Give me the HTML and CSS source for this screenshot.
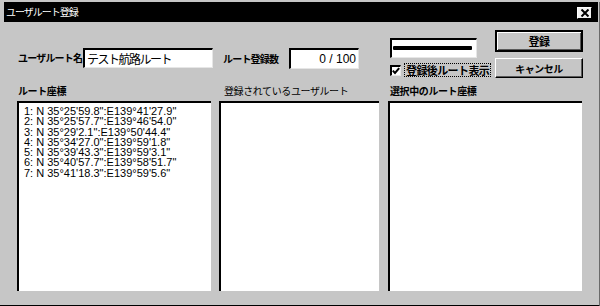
FILE: index.html
```html
<!DOCTYPE html>
<html lang="ja">
<head>
<meta charset="utf-8">
<title>ユーザルート登録</title>
<link rel="stylesheet" href="styles.css">
</head>
<body>
<div class="window">
  <div class="titlebar">
    <span class="title">ユーザルート登録</span>
    <span class="close"><svg width="10" height="8" viewBox="0 0 10 8"><path d="M1.5 0.5 L8.5 7.5 M8.5 0.5 L1.5 7.5" stroke="#000" stroke-width="2" fill="none"/></svg></span>
  </div>
  <div class="top">
    <div class="field name-field">
      <span class="label bold">ユーザルート名</span>
      <div class="input name-input">テスト航路ルート</div>
    </div>
    <div class="field count-field">
      <span class="label bold">ルート登録数</span>
      <div class="input count-input">0 / 100</div>
    </div>
    <div class="preview-group">
      <div class="preview"><span class="line"></span></div>
      <div class="check-row">
        <span class="checkbox"><svg width="8" height="8" viewBox="0 0 8 8"><path d="M0.8 3.6 L3 6 L7.2 1.2" stroke="#000" stroke-width="2" fill="none"/></svg></span>
        <span class="check-label">登録後ルート表示</span>
      </div>
    </div>
    <div class="buttons">
      <div class="btn btn-default">登録</div>
      <div class="btn">キャンセル</div>
    </div>
  </div>
  <div class="panes">
    <div class="pane pane-1">
      <div class="pane-label bold">ルート座標</div>
      <div class="list">
        <div class="item">1: N 35°25'59.8":E139°41'27.9"</div>
        <div class="item">2: N 35°25'57.7":E139°46'54.0"</div>
        <div class="item">3: N 35°29'2.1":E139°50'44.4"</div>
        <div class="item">4: N 35°34'27.0":E139°59'1.8"</div>
        <div class="item">5: N 35°39'43.3":E139°59'3.1"</div>
        <div class="item">6: N 35°40'57.7":E139°58'51.7"</div>
        <div class="item">7: N 35°41'18.3":E139°59'5.6"</div>
      </div>
    </div>
    <div class="pane pane-2">
      <div class="pane-label">登録されているユーザルート</div>
      <div class="list"></div>
    </div>
    <div class="pane pane-3">
      <div class="pane-label bold">選択中のルート座標</div>
      <div class="list"></div>
    </div>
  </div>
</div>
</body>
</html>
```

FILE: styles.css
```css
html, body {
  margin: 0;
  padding: 0;
}

body {
  width: 600px;
  height: 306px;
  overflow: hidden;
  background: #c6c6c6;
  color: #000;
  font-family: "Noto Sans CJK JP", "Liberation Sans", sans-serif;
}

.window {
  box-sizing: border-box;
  width: 600px;
  height: 306px;
  border-right: 1px solid #6a6a6a;
  border-bottom: 3px solid #000;
}

.titlebar {
  height: 20px;
  margin: 2px 1px 0 4px;
  padding: 0 6px 0 2px;
  background: #000;
  display: flex;
  align-items: center;
  justify-content: space-between;
}

.title {
  color: #fff;
  font-size: 10px;
  line-height: 1;
  letter-spacing: -1px;
}

.close {
  box-sizing: border-box;
  width: 15px;
  height: 12px;
  margin-top: 2px;
  background: #f2f2f2;
  border: 1px solid;
  border-color: #fff #000 #000 #fff;
  display: flex;
  align-items: center;
  justify-content: center;
}

.bold {
  font-weight: 700;
}

.top {
  display: flex;
  align-items: flex-start;
  height: 62px;
  padding-left: 17px;
}

.field {
  display: flex;
  align-items: center;
  margin-top: 26px;
}

.label {
  font-size: 10px;
  line-height: 12px;
  letter-spacing: -0.8px;
  white-space: nowrap;
}

.name-field .label {
  width: 66px;
  padding-left: 1px;
  box-sizing: border-box;
}

.count-field {
  margin-left: 10px;
}

.count-field .label {
  width: 66px;
}

.input {
  box-sizing: border-box;
  background: #fff;
  border-style: solid;
  border-width: 2px 1px 1px 2px;
  border-color: #000 #e6e6e6 #e6e6e6 #000;
  white-space: nowrap;
}

.name-input {
  width: 130px;
  height: 20px;
  padding-left: 2px;
  font-size: 12px;
  line-height: 17px;
  letter-spacing: -1.5px;
}

.count-input {
  width: 70px;
  height: 21px;
  padding-right: 2px;
  text-align: right;
  font-family: "Liberation Sans", sans-serif;
  font-size: 12px;
  line-height: 18px;
}

.preview-group {
  width: 100px;
  margin-left: 31px;
  margin-top: 16px;
}

.preview {
  box-sizing: border-box;
  width: 87px;
  height: 20px;
  background: #fff;
  border-style: solid;
  border-width: 2px 1px 1px 2px;
  border-color: #000 #e6e6e6 #e6e6e6 #000;
  padding: 0 4px 0 1px;
  display: flex;
  align-items: center;
}

.line {
  display: block;
  flex: 1;
  height: 4px;
  margin-top: -1px;
  background: #000;
  border-radius: 1px;
}

.check-row {
  display: flex;
  align-items: center;
  margin-top: 5px;
}

.checkbox {
  box-sizing: border-box;
  width: 11px;
  height: 11px;
  background: #fff;
  border-style: solid;
  border-width: 2px 1px 1px 2px;
  border-color: #000 #e6e6e6 #e6e6e6 #000;
  display: flex;
  align-items: center;
  justify-content: center;
}

.check-label {
  margin-left: 3px;
  padding: 0 1px;
  border: 1px dotted #000;
  font-size: 11px;
  font-weight: 700;
  line-height: 12px;
  letter-spacing: -0.6px;
  white-space: nowrap;
}

.buttons {
  width: 88px;
  margin-left: 5px;
  margin-top: 8px;
  display: flex;
  flex-direction: column;
  gap: 6px;
}

.btn {
  box-sizing: border-box;
  height: 20px;
  border: 1px solid;
  border-color: #fff #000 #000 #fff;
  box-shadow: inset -1px -1px 0 #5a5a5a;
  font-size: 10px;
  font-weight: 700;
  letter-spacing: -0.5px;
  display: flex;
  align-items: center;
  justify-content: center;
}

.btn-default {
  height: 22px;
  border: 2px solid #000;
  box-shadow: inset 1px 1px 0 #fff, inset -1px -1px 0 #5a5a5a;
  font-size: 11px;
}

.panes {
  display: flex;
  padding-left: 17px;
}

.pane-1 {
  width: 194px;
}

.pane-2 {
  width: 160px;
  margin-left: 8px;
}

.pane-3 {
  width: 194px;
  margin-left: 9px;
}

.pane-label {
  height: 14px;
  margin-bottom: 3px;
  font-size: 10px;
  line-height: 14px;
  letter-spacing: -0.4px;
  white-space: nowrap;
}

.pane-1 .pane-label {
  padding-left: 1px;
}

.pane-2 .pane-label {
  padding-left: 5px;
}

.pane-3 .pane-label {
  padding-left: 2px;
}

.list {
  box-sizing: border-box;
  height: 190px;
  background: #fff;
  border-style: solid;
  border-width: 2px 0 0 2px;
  border-color: #000;
  padding: 3px 0 0 5px;
}

.item {
  font-family: "Liberation Sans", sans-serif;
  font-size: 11px;
  line-height: 10.3px;
  white-space: nowrap;
}
```
